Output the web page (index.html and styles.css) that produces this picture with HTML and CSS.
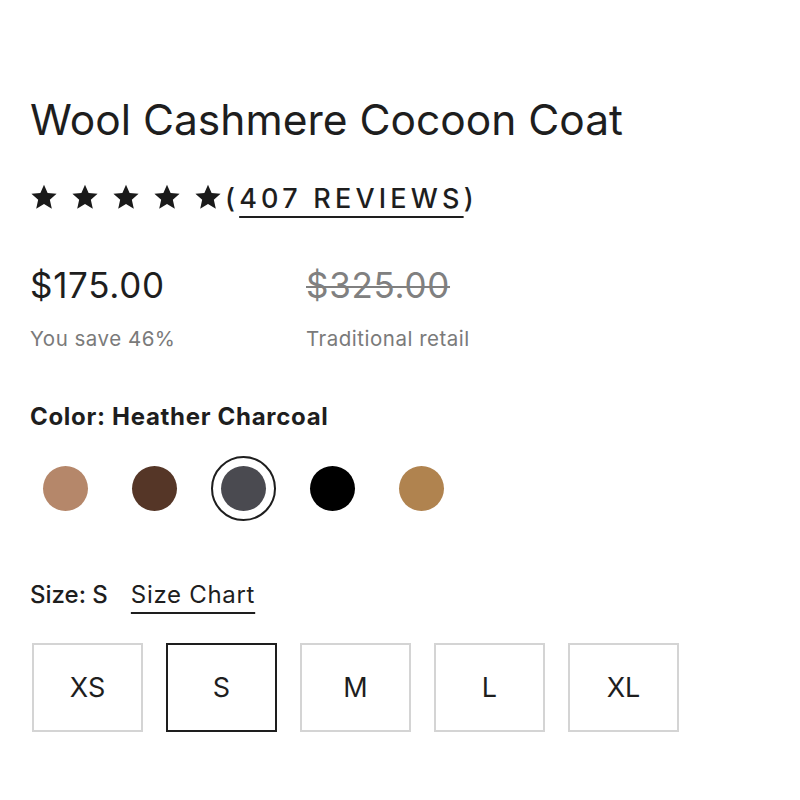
FILE: index.html
```html
<!DOCTYPE html>
<html>
  <head>
    <meta charset="utf-8">
    <title>Wool Cashmere Cocoon Coat</title>
    <link rel="stylesheet" href="styles.css">
  </head>
  <body>
    <section class="product">
      <h1 class="product-title">Wool Cashmere Cocoon Coat</h1>

      <div class="rating">
        <div class="stars">
          <svg class="star" viewBox="0 0 24 24"><path d="M12 1.5l3.1 7.1 7.7.7-5.8 5.1 1.7 7.6L12 18l-6.7 4 1.7-7.6L1.2 9.3l7.7-.7z"/></svg>
          <svg class="star" viewBox="0 0 24 24"><path d="M12 1.5l3.1 7.1 7.7.7-5.8 5.1 1.7 7.6L12 18l-6.7 4 1.7-7.6L1.2 9.3l7.7-.7z"/></svg>
          <svg class="star" viewBox="0 0 24 24"><path d="M12 1.5l3.1 7.1 7.7.7-5.8 5.1 1.7 7.6L12 18l-6.7 4 1.7-7.6L1.2 9.3l7.7-.7z"/></svg>
          <svg class="star" viewBox="0 0 24 24"><path d="M12 1.5l3.1 7.1 7.7.7-5.8 5.1 1.7 7.6L12 18l-6.7 4 1.7-7.6L1.2 9.3l7.7-.7z"/></svg>
          <svg class="star" viewBox="0 0 24 24"><path d="M12 1.5l3.1 7.1 7.7.7-5.8 5.1 1.7 7.6L12 18l-6.7 4 1.7-7.6L1.2 9.3l7.7-.7z"/></svg>
        </div>
        <span class="review-count">(<a href="#reviews">407 REVIEWS</a>)</span>
      </div>

      <div class="prices">
        <div class="price-block">
          <div class="price">$175.00</div>
          <div class="price-note">You save 46%</div>
        </div>
        <div class="price-block">
          <div class="price price-old">$325.00</div>
          <div class="price-note">Traditional retail</div>
        </div>
      </div>

      <div class="option-label color-label">Color: Heather Charcoal</div>
      <div class="swatches">
        <button class="swatch" title="Camel Tan"><span class="swatch-dot tan"></span></button>
        <button class="swatch" title="Chocolate"><span class="swatch-dot chocolate"></span></button>
        <button class="swatch selected" title="Heather Charcoal"><span class="swatch-dot charcoal"></span></button>
        <button class="swatch" title="Black"><span class="swatch-dot black"></span></button>
        <button class="swatch" title="Camel"><span class="swatch-dot camel"></span></button>
      </div>

      <div class="size-header">
        <span class="size-label">Size: S</span>
        <a href="#size-chart" class="size-chart">Size Chart</a>
      </div>
      <div class="sizes">
        <button class="size">XS</button>
        <button class="size selected">S</button>
        <button class="size">M</button>
        <button class="size">L</button>
        <button class="size">XL</button>
      </div>
    </section>
  </body>
</html>
```

FILE: styles.css
```css
:root {
  --color-text: #1e1e1e;
  --color-muted: #7a7a7a;
  --color-border: #d4d4d4;
  --color-white: white;
}

body {
  margin: 0;
  background: var(--color-white);
  color: var(--color-text);
  font-family: Inter, "Liberation Sans", Arial, sans-serif;
}

.product {
  padding: 96px 30px 0;
}

.product-title {
  margin: 0;
  font-size: 42.5px;
  font-weight: normal;
  line-height: 48px;
}

.rating {
  display: flex;
  align-items: center;
  height: 32px;
  margin-top: 37px;
}

.stars {
  display: flex;
  gap: 13px;
}

.star {
  width: 28px;
  height: 28px;
  fill: #1a1a1a;
}

.review-count {
  margin-left: 3px;
  padding-top: 4px;
  font-size: 27px;
  font-weight: 500;
  line-height: 32px;
  letter-spacing: 4.2px;
}

.review-count a {
  color: inherit;
  text-decoration: underline;
  text-decoration-thickness: 2px;
  text-underline-offset: 8px;
}

.prices {
  display: flex;
  margin-top: 52px;
}

.price-block {
  width: 276px;
}

.price {
  font-size: 35px;
  line-height: 40px;
  letter-spacing: 0.7px;
}

.price-old {
  color: #808080;
  text-decoration: line-through;
  text-decoration-thickness: 2px;
}

.price-note {
  margin-top: 21px;
  color: var(--color-muted);
  font-size: 20.5px;
  line-height: 26px;
  letter-spacing: 0.5px;
}

.option-label {
  font-size: 24px;
  font-weight: 700;
  line-height: 28px;
  letter-spacing: 0.7px;
}

.color-label {
  margin-top: 51px;
}

.swatches {
  display: flex;
  gap: 24px;
  margin-top: 25px;
  margin-left: 3px;
}

.swatch {
  display: flex;
  align-items: center;
  justify-content: center;
  width: 65px;
  height: 65px;
  padding: 0;
  border: 2px solid transparent;
  border-radius: 50%;
  background: none;
  cursor: pointer;
}

.swatch.selected {
  border-color: var(--color-text);
}

.swatch-dot {
  width: 45px;
  height: 45px;
  border-radius: 50%;
}

.tan { background: #b5876a; }
.chocolate { background: #553627; }
.charcoal { background: #4a4a50; }
.black { background: #000; }
.camel { background: #b0834f; }

.size-header {
  display: flex;
  gap: 23px;
  margin-top: 59px;
  font-size: 24px;
  line-height: 30px;
}

.size-label {
  font-weight: 500;
}

.size-chart {
  color: inherit;
  letter-spacing: 0.7px;
  text-decoration: underline;
  text-decoration-thickness: 2px;
  text-underline-offset: 9px;
}

.sizes {
  display: flex;
  gap: 23px;
  margin-top: 33px;
  margin-left: 2px;
}

.size {
  width: 111px;
  height: 89px;
  border: 2px solid var(--color-border);
  background: var(--color-white);
  color: var(--color-text);
  font-family: inherit;
  font-size: 27px;
  cursor: pointer;
}

.size.selected {
  border-color: var(--color-text);
}
```
